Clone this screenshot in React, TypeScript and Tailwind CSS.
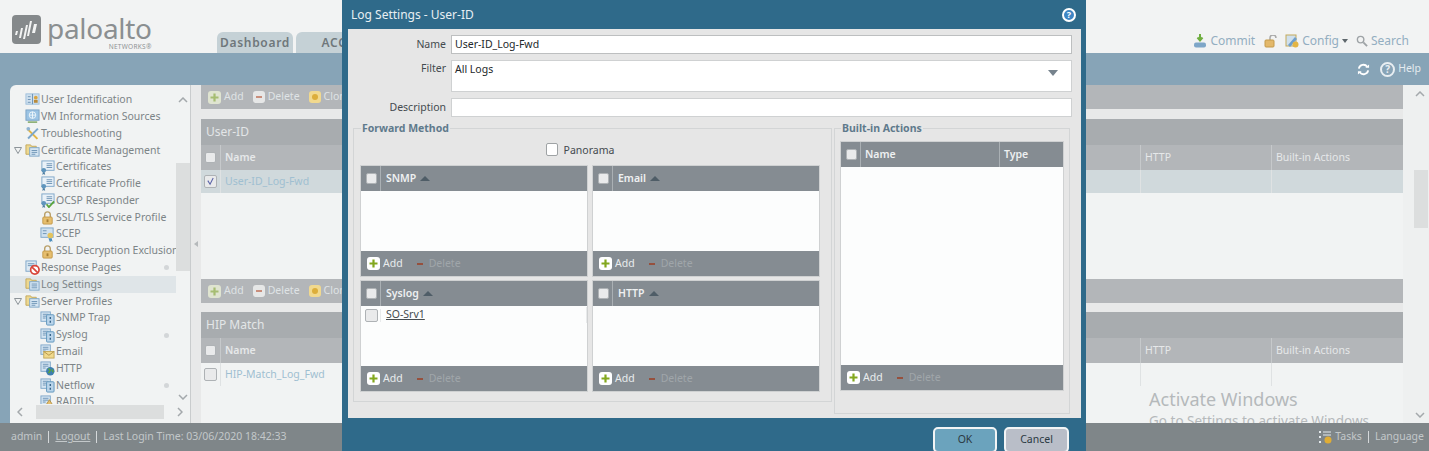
import type { ReactNode } from "react";

type TreeKind = "id" | "vm" | "tools" | "folder" | "cert" | "ocsp" | "lock" | "scep" | "block" | "server" | "mail" | "http" | "radius" | "log";

type TreeItem = {
  label: string;
  depth: 0 | 1;
  kind: TreeKind;
  open?: boolean;
  dot?: boolean;
  active?: boolean;
};

const treeItems: TreeItem[] = [
  { label: "User Identification", depth: 0, kind: "id" },
  { label: "VM Information Sources", depth: 0, kind: "vm" },
  { label: "Troubleshooting", depth: 0, kind: "tools" },
  { label: "Certificate Management", depth: 0, kind: "folder", open: true },
  { label: "Certificates", depth: 1, kind: "cert" },
  { label: "Certificate Profile", depth: 1, kind: "cert" },
  { label: "OCSP Responder", depth: 1, kind: "ocsp" },
  { label: "SSL/TLS Service Profile", depth: 1, kind: "lock" },
  { label: "SCEP", depth: 1, kind: "scep" },
  { label: "SSL Decryption Exclusion", depth: 1, kind: "lock" },
  { label: "Response Pages", depth: 0, kind: "block", dot: true },
  { label: "Log Settings", depth: 0, kind: "log", active: true },
  { label: "Server Profiles", depth: 0, kind: "folder", open: true },
  { label: "SNMP Trap", depth: 1, kind: "server" },
  { label: "Syslog", depth: 1, kind: "server", dot: true },
  { label: "Email", depth: 1, kind: "mail" },
  { label: "HTTP", depth: 1, kind: "http" },
  { label: "Netflow", depth: 1, kind: "server", dot: true },
  { label: "RADIUS", depth: 1, kind: "radius" },
];

function TreeIcon({ kind }: { kind: TreeKind }) {
  const page = "#9fc0dc";
  return (
    <svg viewBox="0 0 16 16" className="h-[15px] w-[15px] shrink-0">
      {kind === "id" && (
        <>
          <rect x="1" y="2" width="14" height="11" fill="#cfe0ee" stroke={page} />
          <path d="M8 2v11M3 5h3M3 8h3M3 11h3" stroke="#6d93b5" />
          <circle cx="11.5" cy="6" r="2" fill="#d9a441" />
          <rect x="9.5" y="8.5" width="4" height="3" fill="#b98a3a" />
        </>
      )}
      {kind === "vm" && (
        <>
          <rect x="1" y="1" width="14" height="11" fill="#9cc4e4" stroke="#7aa3c6" />
          <circle cx="8" cy="6.5" r="3.5" fill="none" stroke="#eef5fa" />
          <path d="M4.5 6.5h7M8 3v7" stroke="#eef5fa" />
          <path d="M3 14h10" stroke="#8fb27a" strokeWidth="2" />
        </>
      )}
      {kind === "tools" && (
        <>
          <path d="M3 2l11 11-1.500 1.500L2 4z" fill="#e3b544" />
          <path d="M13 2L2.500 12.500 4 14 14.500 3.500z" fill="#7ca7cb" />
          <circle cx="3.500" cy="3" r="2" fill="#8fb3d1" />
        </>
      )}
      {(kind === "folder" || kind === "log") && (
        <>
          <path d="M1 2h5l1 1.500h5V12H1z" fill="#ecd891" stroke="#c4a95a" />
          <rect x="5" y="5" width="10" height="9" fill="#d5e5f2" stroke="#7ea6c8" />
          {kind === "folder" ? (
            <path d="M7 8h6M7 10h6M7 12h4" stroke="#6d93b5" />
          ) : (
            <path d="M7 7.500h6M7 9.500h6M7 11.500h6" stroke="#6d93b5" />
          )}
        </>
      )}
      {(kind === "cert" || kind === "ocsp") && (
        <>
          <rect x="2" y="1" width="13" height="10" fill="#e9f1f8" stroke="#7ea6c8" />
          <path d="M7 4h6M7 6h6M7 8h6" stroke="#6d93b5" />
          <circle cx="4" cy="11" r="2.500" fill="#5f95bd" />
          <path d="M3 13l-.500 3 1.500-1 1.500 1-.500-3" fill="#4d7ea3" />
          {kind === "ocsp" && <path d="M7 12l2.500 3L15 9" fill="none" stroke="#5aa53c" strokeWidth="2" />}
        </>
      )}
      {kind === "lock" && (
        <>
          <path d="M5 8V5a3 3 0 0 1 6 0v3" fill="none" stroke="#b9a06a" strokeWidth="1.500" />
          <rect x="3" y="7.500" width="10" height="7.500" rx="1" fill="#e6be6e" stroke="#c49a4a" />
          <rect x="7" y="10" width="2" height="3" fill="#a87f34" />
        </>
      )}
      {kind === "scep" && (
        <>
          <rect x="1" y="1" width="13" height="10" fill="#cfe0ee" stroke="#7ea6c8" />
          <path d="M3 4h4M3 7h4" stroke="#6d93b5" />
          <circle cx="11" cy="9" r="3" fill="#e3c35d" />
          <path d="M9 12l1.500 4 2-1 1 1-1-4" fill="#4d8fbd" />
        </>
      )}
      {kind === "block" && (
        <>
          <rect x="1" y="1" width="11" height="11" fill="#dce9f3" stroke="#7ea6c8" />
          <path d="M3 4h7M3 6h7" stroke="#6d93b5" />
          <circle cx="10.500" cy="10.500" r="4.500" fill="#fff" stroke="#d9453a" strokeWidth="1.800" />
          <path d="M7.500 7.500l6 6" stroke="#d9453a" strokeWidth="1.800" />
        </>
      )}
      {(kind === "server" || kind === "mail" || kind === "http" || kind === "radius") && (
        <>
          <rect x="1" y="1" width="10" height="10" fill="#d5e5f2" stroke="#7ea6c8" />
          <path d="M3 3.500h6M3 5.500h6M3 7.500h3" stroke="#6d93b5" />
          {kind === "server" && (
            <>
              <rect x="7" y="4" width="8" height="11" rx="1" fill="#b9d4ea" stroke="#5f95bd" />
              <path d="M11 6.500v2M11 10.500v2" stroke="#37658a" strokeWidth="1.500" />
            </>
          )}
          {kind === "mail" && (
            <>
              <rect x="4" y="8" width="11" height="7" fill="#f0d98c" stroke="#c4a95a" />
              <path d="M4 8l5.500 4L15 8" fill="none" stroke="#b3944a" />
            </>
          )}
          {kind === "http" && (
            <>
              <circle cx="11" cy="11" r="4.500" fill="#3d7eb0" />
              <path d="M9 8l2 2-2 3M13 9l1 3" stroke="#5aa53c" strokeWidth="1.500" fill="none" />
            </>
          )}
          {kind === "radius" && (
            <>
              <path d="M10 5l5 8H5z" fill="#e6be6e" stroke="#b3944a" />
            </>
          )}
        </>
      )}
    </svg>
  );
}

function Sidebar() {
  return (
    <aside className="relative flex w-[180px] shrink-0 flex-col overflow-hidden rounded-tl-md bg-[#f1f3f3]">
      <div className="flex h-[319px]">
        <ul className="h-full w-[166px] overflow-hidden pt-[6.600px]">
          {treeItems.map((item) => (
            <li
              key={item.label}
              className={`flex h-[16.800px] items-center pl-[4px] ${item.active ? "bg-[#dfe5e8]" : ""}`}
            >
              <span className="flex w-[11px] shrink-0 items-center">
                {item.open && (
                  <svg viewBox="0 0 8 7" className="h-[7px] w-[8px]">
                    <path d="M.5.5h7L4 6.500z" fill="none" stroke="#8d9499" />
                  </svg>
                )}
              </span>
              {item.depth === 1 && <span className="w-[15px] shrink-0" />}
              <TreeIcon kind={item.kind} />
              <span className="ml-px flex-1 whitespace-nowrap text-[#7c8487]">{item.label}</span>
              {item.dot && <span className="mr-[7px] h-[5px] w-[5px] rounded-full bg-[#d3d6d8]" />}
            </li>
          ))}
        </ul>
        <div className="flex w-[14px] flex-col items-center justify-between pt-[12px] pb-[4px]">
          <Chevron up />
          <Chevron />
        </div>
      </div>
      <div className="absolute top-[78px] left-[166px] h-[108px] w-[14px] bg-[#dcdede]" />
      <div className="flex h-[15px] items-center justify-between px-[5px]">
        <Chevron left />
        <div className="h-[14px] w-[128px] bg-[#dcdede]" />
        <Chevron right />
      </div>
    </aside>
  );
}

function Chevron({ up, left, right }: { up?: boolean; left?: boolean; right?: boolean }) {
  const rotate = up ? "rotate-180" : left ? "rotate-90" : right ? "-rotate-90" : "";
  return (
    <svg viewBox="0 0 10 6" className={`h-[6px] w-[10px] ${rotate}`}>
      <path d="M1 1l4 4 4-4" fill="none" stroke="#a4a9ac" strokeWidth="1.500" />
    </svg>
  );
}

function PlusIcon({ dim }: { dim?: boolean }) {
  return (
    <span className={`relative h-[13px] w-[13px] shrink-0 rounded-[3px] ${dim ? "bg-[#dfe4d0]" : "bg-white"}`}>
      <svg viewBox="0 0 13 13" className="h-[13px] w-[13px]">
        <path d="M6.500 2.500v8M2.500 6.500h8" stroke={dim ? "#a6bd72" : "#83a81e"} strokeWidth="2.200" />
      </svg>
    </span>
  );
}

function MinusIcon({ dim }: { dim?: boolean }) {
  return (
    <span className={`h-[12px] w-[12px] shrink-0 rounded-[3px] ${dim ? "bg-[#e6e7e7]" : "bg-[#c6cacd]"}`}>
      <svg viewBox="0 0 12 12" className="h-[12px] w-[12px]">
        <path d="M3 6h6" stroke={dim ? "#c98e7c" : "#96503d"} strokeWidth="2" />
      </svg>
    </span>
  );
}

function PageToolbar() {
  return (
    <div className="flex h-[24px] items-center gap-[9px] bg-[#b3b6b9] pl-[7px] text-[#dfe3e5]">
      <span className="flex items-center gap-[3px]">
        <PlusIcon dim />
        Add
      </span>
      <span className="flex items-center gap-[3px]">
        <MinusIcon dim />
        Delete
      </span>
      <span className="flex items-center gap-[3px]">
        <span className="flex h-[12px] w-[12px] items-center justify-center rounded-[3px] bg-[#f1d98e]">
          <span className="h-[6px] w-[6px] rounded-full bg-[#dcae3b]" />
        </span>
        Clone
      </span>
    </div>
  );
}

function CheckBox({ checked, big }: { checked?: boolean; big?: boolean }) {
  return (
    <span
      className={`flex shrink-0 items-center justify-center rounded-[2px] border border-[#aeb2b5] bg-[#e9eaeb] ${big ? "h-[13px] w-[13px]" : "h-[11px] w-[11px]"}`}
    >
      {checked && (
        <svg viewBox="0 0 10 10" className="h-[9px] w-[9px]">
          <path d="M2 4l2.500 4L8 1" fill="none" stroke="#5b64a8" strokeWidth="1.200" />
        </svg>
      )}
    </span>
  );
}

function PageTable({ title, name, selected }: { title: string; name: string; selected?: boolean }) {
  return (
    <section>
      <div className="flex h-[26px] items-center bg-[#a8acaf] pl-[5px] text-[12px] text-[#e3e6e7]">{title}</div>
      <div className="flex h-[25px] items-stretch bg-[#b3b6b9] font-semibold text-[#e6e8e9]">
        <div className="flex w-[20px] items-center justify-center border-r border-[#c6c9cb]">
          <CheckBox />
        </div>
        <div className="flex w-[919px] items-center pl-[4px]">Name</div>
        <div className="flex w-[131px] items-center border-l border-[#c6c9cb] pl-[4px] font-normal">HTTP</div>
        <div className="flex flex-1 items-center border-l border-[#c6c9cb] pl-[4px] font-normal">Built-in Actions</div>
      </div>
      <div className={`flex h-[23px] items-stretch ${selected ? "bg-[#d0d9dc]" : ""}`}>
        <div className="flex w-[20px] items-center justify-center border-r border-[#dfe2e3]">
          <CheckBox checked={selected} big />
        </div>
        <div className="flex w-[919px] items-center pl-[4px] text-[#9fbfd1]">{name}</div>
        <div className="w-[131px] border-l border-[#dfe2e3]" />
        <div className="flex-1 border-l border-[#dfe2e3]" />
      </div>
    </section>
  );
}

function PageContent() {
  return (
    <main className="relative flex-1 overflow-hidden bg-[#e8e9e9]">
      <PageToolbar />
      <div className="mt-[10px] bg-[#f1f3f3]">
        <PageTable title="User-ID" name="User-ID_Log-Fwd" selected />
        <div className="h-[86px]" />
      </div>
      <PageToolbar />
      <div className="mt-[9px] h-[200px] bg-[#f1f3f3]">
        <PageTable title="HIP Match" name="HIP-Match_Log_Fwd" />
      </div>
      <div className="absolute top-[302px] left-[948px] whitespace-nowrap text-[#b5b9bb]">
        <p className="text-[18px] leading-[24px]">Activate Windows</p>
        <p className="text-[13.500px] leading-[20px]">Go to Settings to activate Windows.</p>
      </div>
    </main>
  );
}

function GridHeader({ label }: { label: string }) {
  return (
    <div className="flex h-[25px] shrink-0 items-center bg-[#858c92] font-semibold text-[#eef0f1]">
      <div className="flex h-full w-[20px] items-center justify-center border-r border-[#aab0b4] pl-[2px]">
        <CheckBox />
      </div>
      <span className="ml-[5px]">{label}</span>
      <span className="ml-[4px] h-0 w-0 border-x-[5px] border-b-[5px] border-x-transparent border-b-[#4f5d67]" />
    </div>
  );
}

function GridFooter() {
  return (
    <div className="flex h-[25px] shrink-0 items-center bg-[#858c92] pl-[6px]">
      <PlusIcon />
      <span className="ml-[3px] text-[#e9ecee]">Add</span>
      <span className="ml-[11px]">
        <MinusIcon />
      </span>
      <span className="ml-[3px] text-[#a0a6aa]">Delete</span>
    </div>
  );
}

function GridPanel({ label, children }: { label: string; children?: ReactNode }) {
  return (
    <div className="flex h-[112px] flex-col border border-[#cfd1d2] bg-[#fcfdfd]">
      <GridHeader label={label} />
      <div className="flex-1 overflow-hidden">{children}</div>
      <GridFooter />
    </div>
  );
}

function FieldRow({ label, children, top }: { label: string; children: ReactNode; top?: boolean }) {
  return (
    <div className={`flex gap-[5px] ${top ? "items-start" : "items-center"}`}>
      <label className={`w-[98px] text-right text-[#444b4f] ${top ? "pt-[1px]" : ""}`}>{label}</label>
      {children}
    </div>
  );
}

function LogSettingsModal() {
  return (
    <div className="absolute top-0 left-[342px] flex h-[451px] w-[744px] flex-col overflow-hidden bg-[#2f6a8a]">
      <div className="flex h-[29px] shrink-0 items-center justify-between pr-[10px] pl-[9px]">
        <span className="text-[12px] text-[#e8eff3]">Log Settings - User-ID</span>
        <span className="flex h-[14px] w-[14px] items-center justify-center rounded-full border-2 border-white bg-[#3f86c4] text-[9px] font-bold text-white">
          ?
        </span>
      </div>
      <div className="mr-[5px] ml-[6px] h-[389px] shrink-0 bg-[#e6e6e6] pt-[6px]">
        <div className="flex flex-col gap-[6px] pr-[9px]">
          <FieldRow label="Name">
            <div className="flex h-[19px] flex-1 items-center border border-[#bdbfc0] bg-white pl-[3px] text-[#23282b]">
              User-ID_Log-Fwd
            </div>
          </FieldRow>
          <FieldRow label="Filter" top>
            <div className="relative h-[32px] flex-1 border border-[#cfd1d2] bg-white pt-[1px] pl-[3px] text-[#23282b]">
              All Logs
              <span className="absolute top-[9px] right-[13px] h-0 w-0 border-x-[5px] border-t-[6px] border-x-transparent border-t-[#76838d]" />
            </div>
          </FieldRow>
          <FieldRow label="Description">
            <div className="h-[19px] flex-1 border border-[#cfd1d2] bg-white" />
          </FieldRow>
        </div>
        <div className="mt-[5px] flex gap-[2px] pl-[5px]">
          <fieldset className="h-[280px] w-[479px] border border-[#d3d5d6] pr-[11px] pl-[6px]">
            <legend className="ml-[1px] px-[1px] text-[10.500px] leading-[12px] font-bold text-[#5f7a8c]">Forward Method</legend>
            <div className="flex h-[31px] items-start justify-center gap-[6px] pt-[9px] pr-[20px] text-[#444b4f]">
              <span className="h-[13px] w-[12px] rounded-[2px] border border-[#9fa3a5] bg-white" />
              <span className="leading-[15px]">Panorama</span>
            </div>
            <div className="grid grid-cols-2 gap-x-[4px] gap-y-[3px]">
              <GridPanel label="SNMP" />
              <GridPanel label="Email" />
              <GridPanel label="Syslog">
                <div className="flex h-[18px] items-center">
                  <div className="flex w-[20px] justify-center border-r border-[#e8eaeb] pl-px">
                    <CheckBox big />
                  </div>
                  <span className="ml-[5px] flex-1 border-r border-[#e8eaeb] text-[#454c50] underline">SO-Srv1</span>
                </div>
              </GridPanel>
              <GridPanel label="HTTP" />
            </div>
          </fieldset>
          <fieldset className="h-[292px] w-[236px] border border-[#d3d5d6] pl-[5px]">
            <legend className="ml-[1px] px-[1px] text-[10.500px] leading-[12px] font-bold text-[#5f7a8c]">Built-in Actions</legend>
            <div className="mt-[7px] flex h-[250px] w-[224px] flex-col border border-[#cfd1d2] bg-[#fcfdfd]">
              <div className="flex h-[25px] shrink-0 items-center bg-[#858c92] font-semibold text-[#eef0f1]">
                <div className="flex h-full w-[20px] items-center justify-center border-r border-[#aab0b4] pl-[2px]">
                  <CheckBox />
                </div>
                <span className="ml-[4px] w-[134px]">Name</span>
                <span className="flex h-full items-center border-l border-[#aab0b4] pl-[4px]">Type</span>
              </div>
              <div className="flex-1" />
              <GridFooter />
            </div>
          </fieldset>
        </div>
      </div>
      <div className="flex justify-end gap-[7px] pt-[9px] pr-[17px]">
        <button className="h-[26px] w-[64px] rounded-[5px] border-2 border-[#f2f4f5] bg-[#6ba3bd] text-[#2b3a43]">OK</button>
        <button className="h-[26px] w-[65px] rounded-[5px] border-2 border-[#f2f4f5] bg-[#b9bec8] text-[#2b3a43]">Cancel</button>
      </div>
    </div>
  );
}

function LogoMark() {
  return (
    <svg viewBox="0 0 29 29" className="h-[29px] w-[29px]">
      <rect width="29" height="29" rx="4" fill="#85898b" />
      <path d="M3 20l1-4h2l-1 4zM7 23l2-10h2l-2 10zM11 24l3-14h2l-3 14zM15 21l3-15h2l-3 15zM20 18l2-9h3l-2 9z" fill="#f2f3f3" />
    </svg>
  );
}

function Header() {
  return (
    <header className="flex h-[53px] shrink-0 items-end justify-between bg-[#f2f3f3] pr-[20px]">
      <div className="flex h-full items-end">
        <div className="flex h-full w-[217px] items-start pt-[15px] pl-[12px]">
          <LogoMark />
          <div className="ml-[6px] flex flex-col items-end">
            <span className="text-[28px] leading-[27px] tracking-[-0.3px] text-[#8b8f91]">paloalto</span>
            <span className="mt-[1px] text-[6.500px] leading-[8px] tracking-[0.3px] text-[#8e9294]">NETWORKS®</span>
          </div>
        </div>
        <div className="flex h-[21px] w-[76px] items-center justify-center rounded-t-md bg-[#c5d1d6] text-[12px] font-semibold tracking-[0.7px] text-[#6f777b]">
          Dashboard
        </div>
        <div className="ml-[3px] flex h-[21px] w-[76px] items-center justify-center rounded-t-md bg-[#c5d1d6] text-[12px] font-semibold tracking-[0.7px] text-[#6f777b]">
          ACC
        </div>
      </div>
      <div className="flex items-center pb-[3px] text-[12px] text-[#93aec1]">
        <svg viewBox="0 0 14 14" className="h-[14px] w-[14px]">
          <path d="M7 0v5M4.500 3.500L7 6.500l2.500-3" fill="none" stroke="#6fae3f" strokeWidth="2" />
          <rect x="1" y="8.500" width="12" height="5" rx="2" fill="#7ea6c8" />
        </svg>
        <span className="ml-[3px]">Commit</span>
        <svg viewBox="0 0 13 13" className="ml-[9px] h-[13px] w-[13px]">
          <path d="M6 5V3a3 3 0 0 1 6 0" fill="none" stroke="#a9a9a9" strokeWidth="1.500" />
          <rect x="1" y="5" width="9" height="7" rx="1" fill="#e3b86a" stroke="#c49a4a" />
        </svg>
        <svg viewBox="0 0 14 14" className="ml-[8px] h-[14px] w-[14px]">
          <rect x="1" y="1" width="10" height="11" fill="#cfe0ee" stroke="#c4a95a" />
          <path d="M3 11l7-8 2 2-7 8z" fill="#6f9fcb" />
          <circle cx="10.500" cy="10.500" r="3" fill="#e3b544" />
        </svg>
        <span className="ml-[3px]">Config</span>
        <span className="ml-[3px] h-0 w-0 border-x-[3.500px] border-t-[4px] border-x-transparent border-t-[#5e676c]" />
        <svg viewBox="0 0 13 13" className="ml-[8px] h-[12px] w-[12px]">
          <circle cx="5" cy="5" r="3.500" fill="none" stroke="#9ea3a6" strokeWidth="1.500" />
          <path d="M8 8l4 4" stroke="#9ea3a6" strokeWidth="2" />
        </svg>
        <span className="ml-[3px]">Search</span>
      </div>
    </header>
  );
}

function BlueBar() {
  return (
    <div className="flex h-[32px] shrink-0 items-center justify-end bg-[#87a4b7] pr-[8px] text-[#e4ebef]">
      <svg viewBox="0 0 14 14" className="h-[13px] w-[13px]">
        <path d="M2 6a5 5 0 0 1 9-2M12 8a5 5 0 0 1-9 2" fill="none" stroke="#fff" strokeWidth="2" />
        <path d="M9 5h4V1.500zM5 9H1v3.500z" fill="#fff" />
      </svg>
      <span className="ml-[10px] flex h-[15px] w-[15px] items-center justify-center rounded-full border-2 border-[#e8eef2] bg-[#87a4b7] text-[10px] font-bold text-[#e8eef2]">
        ?
      </span>
      <span className="ml-[3px]">Help</span>
    </div>
  );
}

function FooterBar() {
  return (
    <footer className="flex h-[28px] shrink-0 items-center justify-between bg-[#7f8689] px-[11px] pr-[5px] text-[#c3c8ca]">
      <div className="flex items-center">
        <span>admin</span>
        <span className="mx-[6px] h-[12px] w-px bg-[#d5d8da]" />
        <span className="underline">Logout</span>
        <span className="mx-[6px] h-[12px] w-px bg-[#d5d8da]" />
        <span>Last Login Time: 03/06/2020 18:42:33</span>
      </div>
      <div className="flex items-center">
        <svg viewBox="0 0 14 14" className="h-[14px] w-[14px]">
          <path d="M1 1h2v2H1zM1 6h2v2H1zM1 11h2v2H1z" fill="#e4e9ec" />
          <path d="M5 2h8M5 5h8" stroke="#e4e9ec" />
          <circle cx="10" cy="10" r="3.500" fill="#e0ad35" />
        </svg>
        <span className="ml-[3px]">Tasks</span>
        <span className="mx-[6px] h-[12px] w-px bg-[#d5d8da]" />
        <span>Language</span>
      </div>
    </footer>
  );
}

export default function App() {
  return (
    <div className="relative flex h-[451px] w-[1429px] flex-col overflow-hidden bg-[#87a4b7] font-['Noto_Sans',sans-serif] text-[10.500px]">
      <Header />
      <BlueBar />
      <div className="flex min-h-0 flex-1 pl-[10px]">
        <Sidebar />
        <div className="flex w-[11px] shrink-0 items-center justify-center border-l border-[#c9cccd] bg-[#e8e9e9] pb-[20px]">
          <span className="h-0 w-0 border-y-[3px] border-r-[4px] border-y-transparent border-r-[#b5b9bb]" />
        </div>
        <PageContent />
        <div className="relative flex w-[26px] shrink-0 flex-col items-end justify-between bg-[#eef0f0] pt-[6px] pr-[4px] pb-[5px]">
          <Chevron up />
          <div className="absolute top-[85px] right-px h-[58px] w-[14px] bg-[#dcdede]" />
          <Chevron />
        </div>
      </div>
      <FooterBar />
      <LogSettingsModal />
    </div>
  );
}
